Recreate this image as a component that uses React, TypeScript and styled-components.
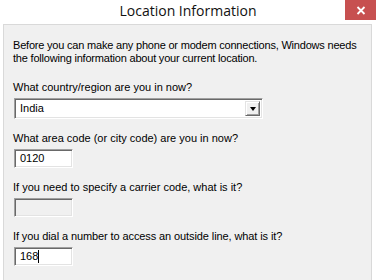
import React from "react";
import styled, { createGlobalStyle } from "styled-components";

const Global = createGlobalStyle`
  html, body { margin: 0; padding: 0; background: #ffffff; }
  * { box-sizing: border-box; }
`;

const Window = styled.div`
  width: 376px;
  height: 280px;
  background: #ffffff;
  display: flex;
  flex-direction: column;
  overflow: hidden;
`;

const TitleBar = styled.div`
  height: 24px;
  flex: none;
  display: grid;
  grid-template-columns: 1fr auto 1fr;
  align-items: start;
`;

const Title = styled.div`
  grid-column: 2;
  font-family: "Open Sans", "Noto Sans", sans-serif;
  font-size: 14px;
  line-height: 22px;
  color: #111111;
`;

const Close = styled.div`
  grid-column: 3;
  justify-self: end;
  width: 31px;
  height: 20px;
  background: #c75050;
  display: flex;
  align-items: center;
  justify-content: center;
`;

const Panel = styled.div`
  flex: 1;
  margin: 0 4px 0 3px;
  background: #f0f0f0;
  border-top: 1px solid #d9d9d9;
  border-left: 1px solid #d9d9d9;
  border-right: 1px solid #d9d9d9;
  padding: 14px 0 0 9px;
  display: flex;
  flex-direction: column;
  font-family: "Liberation Sans", Arial, sans-serif;
  font-size: 11px;
  color: #000000;
`;

const Intro = styled.div`
  line-height: 13px;
  margin-bottom: 16px;
  letter-spacing: -0.2px;
`;

const Field = styled.div`
  display: flex;
  flex-direction: column;
  gap: 4px;
  margin-bottom: 13px;
`;

const Label = styled.div<{ $tight?: boolean }>`
  line-height: 13px;
  letter-spacing: ${(p) => (p.$tight ? "-0.1px" : "0")};
`;

const sunken = `
  border-top: 1px solid #a0a0a0;
  border-left: 1px solid #a0a0a0;
  border-bottom: 1px solid #ffffff;
  border-right: 1px solid #ffffff;
  box-shadow: inset 1px 1px 0 #696969, inset -1px -1px 0 #e3e3e3;
`;

const Combo = styled.div`
  ${sunken}
  margin-left: 1px;
  width: 249px;
  height: 21px;
  background: #ffffff;
  display: flex;
  align-items: center;
  padding: 2px;
`;

const ComboText = styled.div`
  flex: 1;
  padding-left: 3px;
  line-height: 15px;
`;

const ComboButton = styled.div`
  width: 15px;
  height: 15px;
  background: #f0f0f0;
  border-top: 1px solid #e3e3e3;
  border-left: 1px solid #e3e3e3;
  border-bottom: 1px solid #696969;
  border-right: 1px solid #696969;
  box-shadow: inset 1px 1px 0 #ffffff, inset -1px -1px 0 #a0a0a0;
  display: flex;
  align-items: center;
  justify-content: center;
`;

const Arrow = styled.div`
  width: 0;
  height: 0;
  border-left: 3.5px solid transparent;
  border-right: 3.5px solid transparent;
  border-top: 4px solid #000000;
  margin-top: 1px;
`;

const Edit = styled.div<{ $disabled?: boolean }>`
  ${sunken}
  margin-left: 1px;
  width: 59px;
  height: 19px;
  background: ${(p) => (p.$disabled ? "#f0f0f0" : "#ffffff")};
  display: flex;
  align-items: center;
  padding-left: 5px;
  line-height: 13px;
`;

const Caret = styled.span`
  display: inline-block;
  width: 1px;
  height: 13px;
  background: #000000;
`;

export default function App() {
  return (
    <>
      <Global />
      <Window>
        <TitleBar>
          <Title>Location Information</Title>
          <Close>
            <svg width="10" height="9" viewBox="0 0 10 9">
              <path d="M1.5 1 L8.5 8 M8.5 1 L1.5 8" stroke="#ffffff" strokeWidth="1.8" />
            </svg>
          </Close>
        </TitleBar>
        <Panel>
          <Intro>
            Before you can make any phone or modem connections, Windows needs
            <br />
            the following information about your current location.
          </Intro>
          <Field>
            <Label>What country/region are you in now?</Label>
            <Combo>
              <ComboText>India</ComboText>
              <ComboButton>
                <Arrow />
              </ComboButton>
            </Combo>
          </Field>
          <Field>
            <Label>What area code (or city code) are you in now?</Label>
            <Edit>0120</Edit>
          </Field>
          <Field>
            <Label>If you need to specify a carrier code, what is it?</Label>
            <Edit $disabled />
          </Field>
          <Field>
            <Label $tight>If you dial a number to access an outside line, what is it?</Label>
            <Edit>
              168
              <Caret />
            </Edit>
          </Field>
        </Panel>
      </Window>
    </>
  );
}
